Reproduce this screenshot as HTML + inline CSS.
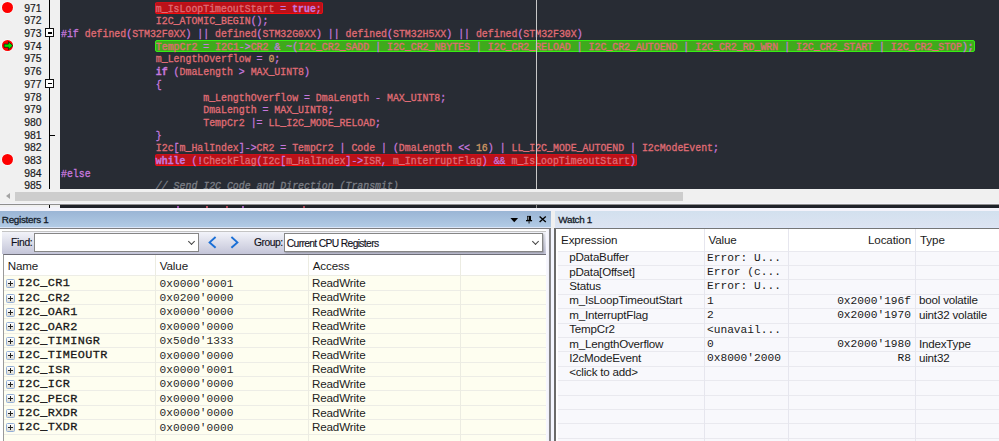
<!DOCTYPE html>
<html><head><meta charset="utf-8"><title>IDE</title><style>
*{margin:0;padding:0;box-sizing:border-box}
html,body{width:999px;height:441px;overflow:hidden;background:#f0f0f0;position:relative}
body{font-family:"Liberation Sans",sans-serif}
.abs{position:absolute}
#ed{position:absolute;left:0;top:0;width:999px;height:188.5px;background:#282c34;overflow:hidden}
#gut{position:absolute;left:0;top:0;width:60.3px;height:188.5px;background:#f0f0f0}
.num{position:absolute;right:18.7px;height:12.7px;line-height:12.7px;font-size:10.4px;color:#1b1b1b;text-align:right;margin-top:1px;-webkit-text-stroke:0.2px}
#gut .num{left:0;width:41.6px;right:auto}
.vline{position:absolute;left:49px;width:1.2px;background:#000}
.fold{position:absolute;left:45.4px;width:9px;height:9px;background:#fff;border:1px solid #111}
.fold:after{content:"";position:absolute;left:1.3px;top:3.2px;width:4.6px;height:1.3px;background:#000}
.tick{position:absolute;left:49.5px;width:5px;height:1.2px;background:#000}
.bp{position:absolute;left:1.6px;width:11.4px;height:11.4px;border-radius:50%;background:#fe0000;box-shadow:0 0 0 0.8px rgba(255,255,255,0.75)}
.ln{position:absolute;left:61px;height:12.7px;line-height:12.7px;white-space:pre;font-family:"Liberation Mono",monospace;font-size:10.6px;transform:scaleX(0.9322);transform-origin:0 0;color:#e06c75;margin-top:1px;-webkit-text-stroke:0.3px}
.r{color:#e06c75}
.p{color:#c678dd}
.k{color:#c678dd;font-weight:bold}
.n{color:#d19a66}
.cm{color:#7c7f86;font-style:italic}
.hl{position:absolute;height:12px;border-radius:2px}
.hl.red{background:#bb1118;border:1px solid #e3101a;border-top-color:#cc1018;border-bottom-color:#f80c0c}
.hl.green{background:#3faa1c;border:1px solid #36ee14}
.guide{position:absolute;left:536px;top:0;width:1.3px;height:188.5px;background:#c8c8c8}
#sb{position:absolute;left:0;top:188.5px;width:999px;height:14.3px;background:#f0f0f0}
#thumb{position:absolute;left:15px;top:3.3px;width:668px;height:9px;background:#cdcdcd}
#sbarrow{position:absolute;left:5.8px;top:4px;width:0;height:0;border-top:3.8px solid transparent;border-bottom:3.8px solid transparent;border-right:4.4px solid #a3a3a3}
/* strip */
#strip{position:absolute;left:0;top:202.8px;width:999px;height:8.2px;background:#f2f2fa}
#strip .gl{position:absolute;left:0;top:1.2px;width:999px;height:1px;background:#8e8e8e}
#strip .dk{position:absolute;left:60px;top:2.2px;width:939px;height:2.6px;background:#1e2128}
#strip .gg{position:absolute;left:0;top:2.2px;width:60px;height:2.4px;background:#f0f0f0}
/* panels */
.title{position:absolute;top:211px;height:16.6px;box-shadow:inset 0 -0.9px 0 #dce6f8;font-size:9.9px;letter-spacing:-0.3px;line-height:17.2px;color:#141c2a;-webkit-text-stroke:0.3px #141c2a}
#rtitle{left:0;width:551px;background:linear-gradient(#9ab5d5,#b3cce6)}
#wtitle{left:554.7px;width:444.3px;background:linear-gradient(#d2e0ee,#dde4f2)}
.tline{position:absolute;top:227.6px;height:1.3px;background:#7e7e80}
#rpanel{position:absolute;left:0;top:229px;width:551px;height:212px;background:#fff}
#rtool{position:absolute;left:2px;top:2.3px;width:545px;height:22.6px;background:linear-gradient(#f2f3f9,#c4c5d8);border-top:1px solid #c4c4c4}
.combo{position:absolute;top:4.4px;height:18.9px;background:#fff;border:1px solid #868686}
.chev{position:absolute;right:4px;top:4.5px;width:5px;height:5px;border-right:1px solid #444;border-bottom:1px solid #444;transform:rotate(45deg)}
.lbl{position:absolute;font-size:10.3px;color:#10101a;-webkit-text-stroke:0.15px #10101a}
.nav{position:absolute;top:5px;width:6px;height:10px}
#grid{position:absolute;left:2.7px;top:25.5px;width:544px;height:190px;background:#fefef0;border-left:1px solid #9a9a9a;border-top:1px solid #6e6e78}
.hdr{position:absolute;left:0;top:0;width:100%;height:20.7px;background:#fff}
.hdr span,.whdr span{position:absolute;top:0;line-height:20.7px;font-size:11px;color:#1a1a1a}
.cdiv{position:absolute;top:0;width:1px;height:20.7px;background:#e3e3e3}
.rrow{position:absolute;left:3.7px;width:543px;height:14.4px}
.rrow:after{content:"";position:absolute;left:0;right:0;top:-0.5px;height:1px;background:#ededE6}
.exp{position:absolute;z-index:3;left:5.6px;width:9px;height:9px;border:1px solid #93aed6;border-radius:1.5px;background:linear-gradient(#ffffff,#dcdad2)}
.exp:before{content:"";position:absolute;left:1px;top:3px;width:5px;height:1px;background:#222}
.exp:after{content:"";position:absolute;left:3px;top:1px;width:1px;height:5px;background:#222}
.rn{position:absolute;z-index:2;left:14px;top:0.7px;line-height:14.4px;font-family:"Liberation Mono",monospace;font-weight:normal;font-size:11.8px;letter-spacing:0.42px;color:#111;-webkit-text-stroke:0.3px #222}
.rv{position:absolute;left:155.9px;top:0.9px;line-height:14.4px;font-family:"Liberation Mono",monospace;font-size:11.2px;color:#2a2a2a}
.ra{position:absolute;left:308.2px;top:0.3px;line-height:14.4px;font-size:11.6px;letter-spacing:-0.1px;color:#222}
.rcd{position:absolute;top:255px;width:1px;height:186px;background:#ecece2}
#sep{position:absolute;left:549.3px;top:229px;width:2.2px;height:212px;background:linear-gradient(90deg,#9a9a9e,#6c6c6c 50%,#a4a4a8)}
#wpanel{position:absolute;left:554.2px;top:228px;width:444.8px;height:213px;background:#fff;border-left:2px solid #6a6a6a;border-top:1.8px solid #767676}
.whdr{position:absolute;left:0;top:0;width:100%;height:21.4px;background:#fff}
.wrow{position:absolute;left:558px;width:441px;height:14.4px}
.wrow:after{content:"";position:absolute;left:0;right:0;top:-0.5px;height:1px;background:#e9e9ef}
.we{position:absolute;left:11.2px;top:-0.9px;line-height:14.4px;font-size:11.6px;letter-spacing:-0.2px;color:#1a1a1a}
.wv{position:absolute;left:149px;top:-0.5px;line-height:14.4px;font-family:"Liberation Mono",monospace;font-size:11.2px;color:#1a1a1a}
.wl{position:absolute;right:88px;top:-0.5px;line-height:14.4px;font-family:"Liberation Mono",monospace;font-size:11.2px;color:#1a1a1a}
.wt{position:absolute;left:361px;top:-0.9px;line-height:14.4px;font-size:11.6px;letter-spacing:-0.2px;color:#1a1a1a}
.wcd{position:absolute;top:229px;width:1px;height:212px;background:#e6e6ee}

</style></head><body>
<div id="ed">
  <div class="hl red" style="left:155.38px;top:1.60px;width:167.54px"></div>
<div class="hl green" style="left:155.38px;top:39.70px;width:819.84px"></div>
<div class="hl red" style="left:155.38px;top:154.00px;width:481.83px"></div>
  <div class="ln" style="top:1.60px">                <span class="r">m_IsLoopTimeoutStart</span> <span class="p">=</span> <span class="k">true</span><span class="p">;</span></div>
<div class="ln" style="top:14.30px">                <span class="r">I2C_ATOMIC_BEGIN</span><span class="p">();</span></div>
<div class="ln" style="top:27.00px"><span class="p">#if</span> <span class="r">defined</span><span class="p">(</span><span class="r">STM32F0XX</span><span class="p">)</span> <span class="p">||</span> <span class="r">defined</span><span class="p">(</span><span class="r">STM32G0XX</span><span class="p">)</span> <span class="p">||</span> <span class="r">defined</span><span class="p">(</span><span class="r">STM32H5XX</span><span class="p">)</span> <span class="p">||</span> <span class="r">defined</span><span class="p">(</span><span class="r">STM32F30X</span><span class="p">)</span></div>
<div class="ln" style="top:39.70px">                <span class="r">TempCr2</span> <span class="p">=</span> <span class="r">I2C1</span><span class="p">-&gt;</span><span class="r">CR2</span> <span class="p">&amp;</span> <span class="p">~(</span><span class="r">I2C_CR2_SADD</span> <span class="p">|</span> <span class="r">I2C_CR2_NBYTES</span> <span class="p">|</span> <span class="r">I2C_CR2_RELOAD</span> <span class="p">|</span> <span class="r">I2C_CR2_AUTOEND</span> <span class="p">|</span> <span class="r">I2C_CR2_RD_WRN</span> <span class="p">|</span> <span class="r">I2C_CR2_START</span> <span class="p">|</span> <span class="r">I2C_CR2_STOP</span><span class="p">);</span></div>
<div class="ln" style="top:52.40px">                <span class="r">m_LengthOverflow</span> <span class="p">=</span> <span class="n">0</span><span class="p">;</span></div>
<div class="ln" style="top:65.10px">                <span class="k">if</span> <span class="p">(</span><span class="r">DmaLength</span> <span class="p">&gt;</span> <span class="r">MAX_UINT8</span><span class="p">)</span></div>
<div class="ln" style="top:77.80px">                <span class="p">{</span></div>
<div class="ln" style="top:90.50px">                        <span class="r">m_LengthOverflow</span> <span class="p">=</span> <span class="r">DmaLength</span> <span class="p">-</span> <span class="r">MAX_UINT8</span><span class="p">;</span></div>
<div class="ln" style="top:103.20px">                        <span class="r">DmaLength</span> <span class="p">=</span> <span class="r">MAX_UINT8</span><span class="p">;</span></div>
<div class="ln" style="top:115.90px">                        <span class="r">TempCr2</span> <span class="p">|=</span> <span class="r">LL_I2C_MODE_RELOAD</span><span class="p">;</span></div>
<div class="ln" style="top:128.60px">                <span class="p">}</span></div>
<div class="ln" style="top:141.30px">                <span class="r">I2c</span><span class="p">[</span><span class="r">m_HalIndex</span><span class="p">]-&gt;</span><span class="r">CR2</span> <span class="p">=</span> <span class="r">TempCr2</span> <span class="p">|</span> <span class="r">Code</span> <span class="p">|</span> <span class="p">(</span><span class="r">DmaLength</span> <span class="p">&lt;&lt;</span> <span class="n">16</span><span class="p">)</span> <span class="p">|</span> <span class="r">LL_I2C_MODE_AUTOEND</span> <span class="p">|</span> <span class="r">I2cModeEvent</span><span class="p">;</span></div>
<div class="ln" style="top:154.00px">                <span class="k">while</span> <span class="p">(!</span><span class="r">CheckFlag</span><span class="p">(</span><span class="r">I2c</span><span class="p">[</span><span class="r">m_HalIndex</span><span class="p">]-&gt;</span><span class="r">ISR</span><span class="p">,</span> <span class="r">m_InterruptFlag</span><span class="p">)</span> <span class="p">&amp;&amp;</span> <span class="r">m_IsLoopTimeoutStart</span><span class="p">)</span></div>
<div class="ln" style="top:166.70px"><span class="p">#else</span></div>
<div class="ln" style="top:179.40px">                <span class="cm">// Send I2C Code and Direction (Transmit)</span></div>
  <div class="guide"></div>
  <div id="gut">
    <div class="num" style="top:1.60px">971</div>
<div class="num" style="top:14.30px">972</div>
<div class="num" style="top:27.00px">973</div>
<div class="num" style="top:39.70px">974</div>
<div class="num" style="top:52.40px">975</div>
<div class="num" style="top:65.10px">976</div>
<div class="num" style="top:77.80px">977</div>
<div class="num" style="top:90.50px">978</div>
<div class="num" style="top:103.20px">979</div>
<div class="num" style="top:115.90px">980</div>
<div class="num" style="top:128.60px">981</div>
<div class="num" style="top:141.30px">982</div>
<div class="num" style="top:154.00px">983</div>
<div class="num" style="top:166.70px">984</div>
<div class="num" style="top:179.40px">985</div>
    <div class="vline" style="top:0;height:28.5px"></div>
    <div class="fold" style="top:28.2px"></div>
    <div class="vline" style="top:37px;height:42.5px"></div>
    <div class="fold" style="top:79px"></div>
    <div class="vline" style="top:87.5px;height:101.5px"></div>
    <div class="tick" style="top:134.5px"></div>
    <div class="bp" style="top:1.7px"></div>
    <div class="bp" style="top:39.7px"><svg width="11" height="11" viewBox="0 0 11 11" style="position:absolute;left:0;top:0"><path d="M2.1 4.1H6.4V1.6L10.9 5.7L6.4 9.8V7.3H2.1Z" fill="#00e400" stroke="#101010" stroke-width="0.7"/></svg></div>
    <div class="bp" style="top:154.1px"></div>
  </div>
</div>
<div id="sb"><div id="sbarrow"></div><div id="thumb"></div></div>
<div id="strip"><div class="gl"></div><div class="gg"></div><div class="dk"></div><div style="position:absolute;left:536.2px;top:1.5px;width:1px;height:3.3px;background:#8a8a8a"></div><div style="position:absolute;left:49.2px;top:2.2px;width:1.2px;height:2.6px;background:#000"></div><div style="position:absolute;left:176.5px;top:3.6px;width:2.4px;height:1.2px;background:#c060d0;opacity:0.8"></div><div style="position:absolute;left:205.8px;top:3.6px;width:2.4px;height:1.2px;background:#e06070;opacity:0.8"></div><div style="position:absolute;left:225.8px;top:3.6px;width:2.4px;height:1.2px;background:#d05060;opacity:0.8"></div><div style="position:absolute;left:241.6px;top:3.6px;width:2.4px;height:1.2px;background:#c070e0;opacity:0.8"></div><div style="position:absolute;left:302.6px;top:3.6px;width:2.4px;height:1.2px;background:#d05060;opacity:0.8"></div></div>

<div id="rtitle" class="title"><span style="position:absolute;left:1.8px">Registers 1</span>
  <svg width="40" height="10" viewBox="0 0 40 10" style="position:absolute;left:509px;top:4px">
    <path d="M1.4 3.1H9.1L5.25 7.2Z" fill="#000"/>
    <path d="M18.1 0.9H22V5.3H18.1Z" fill="#000"/>
    <path d="M19.3 1.6V4.8" stroke="#cfe0e8" stroke-width="0.8"/>
    <path d="M17 5H23.1V6.3H17Z" fill="#000"/>
    <path d="M19.6 6.3H20.5V8.4H19.6Z" fill="#000"/>
    <path d="M30.6 1.4L36.8 7M36.8 1.4L30.6 7" stroke="#000" stroke-width="1.35"/>
  </svg>
</div>
<div class="tline" style="left:0;width:551px"></div>
<div id="wtitle" class="title"><span style="position:absolute;left:3.6px">Watch 1</span></div>
<div class="tline" style="left:554.3px;width:445px"></div>

<div id="rpanel">
  <div id="rtool">
    <span class="lbl" style="left:9px;top:5px;letter-spacing:-0.3px">Find:</span>
    <div class="combo" style="left:32px;width:164.8px;top:1px"><div class="chev"></div></div>
    <svg width="40" height="14" viewBox="0 0 40 14" style="position:absolute;left:202.8px;top:3.8px">
      <path d="M10.6 1L4.6 6.4L10.6 11.8" stroke="#1a6fd6" stroke-width="1.9" fill="none"/>
      <path d="M26.4 1L32.4 6.4L26.4 11.8" stroke="#1a6fd6" stroke-width="1.9" fill="none"/>
    </svg>
    <span class="lbl" style="left:252px;top:5px;letter-spacing:-0.45px">Group:</span>
    <div class="combo" style="left:282.2px;width:259px;top:1px;box-shadow:1px 1px 1.5px rgba(0,0,0,0.25)"><span class="lbl" style="left:1.6px;top:3.3px;letter-spacing:-0.65px">Current CPU Registers</span><div class="chev"></div></div>
  </div>
</div>
<div id="rgridbg" style="position:absolute;left:2.7px;top:253.6px;width:544px;height:188px;background:#fefef0;border-left:1px solid #9a9a9a;border-top:1px solid #6e6e78"></div>
<div style="position:absolute;left:3.7px;top:254.7px;width:543px;height:21px;background:#fff">
  <span style="position:absolute;left:4px;top:0;line-height:21.8px;font-size:11.6px;letter-spacing:-0.1px;color:#1a1a1a">Name</span>
  <span style="position:absolute;left:156px;top:0;line-height:21.8px;font-size:11.6px;letter-spacing:-0.1px;color:#1a1a1a">Value</span>
  <span style="position:absolute;left:309px;top:0;line-height:21.8px;font-size:11.6px;letter-spacing:-0.1px;color:#1a1a1a">Access</span>
</div>
<div class="rrow" style="top:275.70px"><span class="rn">I2C_CR1</span><span class="rv">0x0000&#x27;0001</span><span class="ra">ReadWrite</span></div><div class="exp" style="top:279px"></div>
<div class="rrow" style="top:290.10px"><span class="rn">I2C_CR2</span><span class="rv">0x0200&#x27;0000</span><span class="ra">ReadWrite</span></div><div class="exp" style="top:294px"></div>
<div class="rrow" style="top:304.50px"><span class="rn">I2C_OAR1</span><span class="rv">0x0000&#x27;0000</span><span class="ra">ReadWrite</span></div><div class="exp" style="top:308px"></div>
<div class="rrow" style="top:318.90px"><span class="rn">I2C_OAR2</span><span class="rv">0x0000&#x27;0000</span><span class="ra">ReadWrite</span></div><div class="exp" style="top:322px"></div>
<div class="rrow" style="top:333.30px"><span class="rn">I2C_TIMINGR</span><span class="rv">0x50d0&#x27;1333</span><span class="ra">ReadWrite</span></div><div class="exp" style="top:337px"></div>
<div class="rrow" style="top:347.70px"><span class="rn">I2C_TIMEOUTR</span><span class="rv">0x0000&#x27;0000</span><span class="ra">ReadWrite</span></div><div class="exp" style="top:351px"></div>
<div class="rrow" style="top:362.10px"><span class="rn">I2C_ISR</span><span class="rv">0x0000&#x27;0001</span><span class="ra">ReadWrite</span></div><div class="exp" style="top:366px"></div>
<div class="rrow" style="top:376.50px"><span class="rn">I2C_ICR</span><span class="rv">0x0000&#x27;0000</span><span class="ra">ReadWrite</span></div><div class="exp" style="top:380px"></div>
<div class="rrow" style="top:390.90px"><span class="rn">I2C_PECR</span><span class="rv">0x0000&#x27;0000</span><span class="ra">ReadWrite</span></div><div class="exp" style="top:394px"></div>
<div class="rrow" style="top:405.30px"><span class="rn">I2C_RXDR</span><span class="rv">0x0000&#x27;0000</span><span class="ra">ReadWrite</span></div><div class="exp" style="top:409px"></div>
<div class="rrow" style="top:419.70px"><span class="rn">I2C_TXDR</span><span class="rv">0x0000&#x27;0000</span><span class="ra">ReadWrite</span></div><div class="exp" style="top:423px"></div>
<div class="rrow" style="top:434.10px"></div>
<div class="rrow" style="top:448.50px"></div>
<div class="rcd" style="left:155.4px"></div>
<div class="rcd" style="left:308.2px"></div>
<div class="rcd" style="left:460.2px"></div>
<div style="position:absolute;left:546.2px;top:229px;width:3.4px;height:212px;background:linear-gradient(90deg,#f8f8ff,#f4f4fc 55%,#e4e4f4)"></div><div style="position:absolute;left:551.2px;top:229px;width:3.4px;height:212px;background:#f4f6ff"></div>
<div id="sep"></div>

<div id="wpanel">
</div>
<div style="position:absolute;left:558px;top:250px;width:441px;height:191px;background:#f8f8fc"></div>
<div style="position:absolute;left:556px;top:229.5px;width:443px;height:21px;background:#fff">
  <span style="position:absolute;left:5px;top:0;line-height:19.5px;font-size:11.6px;letter-spacing:-0.1px;color:#1a1a1a">Expression</span>
  <span style="position:absolute;left:152.4px;top:0;line-height:19.5px;font-size:11.6px;letter-spacing:-0.1px;color:#1a1a1a">Value</span>
  <span style="position:absolute;right:88px;top:0;line-height:19.5px;font-size:11.6px;letter-spacing:-0.1px;color:#1a1a1a">Location</span>
  <span style="position:absolute;left:364px;top:0;line-height:19.5px;font-size:11.6px;letter-spacing:-0.1px;color:#1a1a1a">Type</span>
</div>
<div class="wrow" style="top:251.10px"><span class="we">pDataBuffer</span><span class="wv">Error: U...</span><span class="wl"></span><span class="wt"></span></div>
<div class="wrow" style="top:265.50px"><span class="we">pData[Offset]</span><span class="wv">Error (c...</span><span class="wl"></span><span class="wt"></span></div>
<div class="wrow" style="top:279.90px"><span class="we">Status</span><span class="wv">Error: U...</span><span class="wl"></span><span class="wt"></span></div>
<div class="wrow" style="top:294.30px"><span class="we">m_IsLoopTimeoutStart</span><span class="wv">1</span><span class="wl">0x2000'196f</span><span class="wt">bool volatile</span></div>
<div class="wrow" style="top:308.70px"><span class="we">m_InterruptFlag</span><span class="wv">2</span><span class="wl">0x2000'1970</span><span class="wt">uint32 volatile</span></div>
<div class="wrow" style="top:323.10px"><span class="we">TempCr2</span><span class="wv">&lt;unavail...</span><span class="wl"></span><span class="wt"></span></div>
<div class="wrow" style="top:337.50px"><span class="we">m_LengthOverflow</span><span class="wv">0</span><span class="wl">0x2000'1980</span><span class="wt">IndexType</span></div>
<div class="wrow" style="top:351.90px"><span class="we">I2cModeEvent</span><span class="wv">0x8000&#39;2000</span><span class="wl">R8</span><span class="wt">uint32</span></div>
<div class="wrow" style="top:366.30px"><span class="we">&lt;click to add&gt;</span><span class="wv"></span><span class="wl"></span><span class="wt"></span></div>
<div class="wrow" style="top:380.70px"></div>
<div class="wrow" style="top:395.10px"></div>
<div class="wrow" style="top:409.50px"></div>
<div class="wrow" style="top:423.90px"></div>
<div class="wrow" style="top:438.30px"></div>
<div class="wcd" style="left:704.2px"></div>
<div class="wcd" style="left:788px"></div>
<div class="wcd" style="left:915.3px"></div>

</body></html>
